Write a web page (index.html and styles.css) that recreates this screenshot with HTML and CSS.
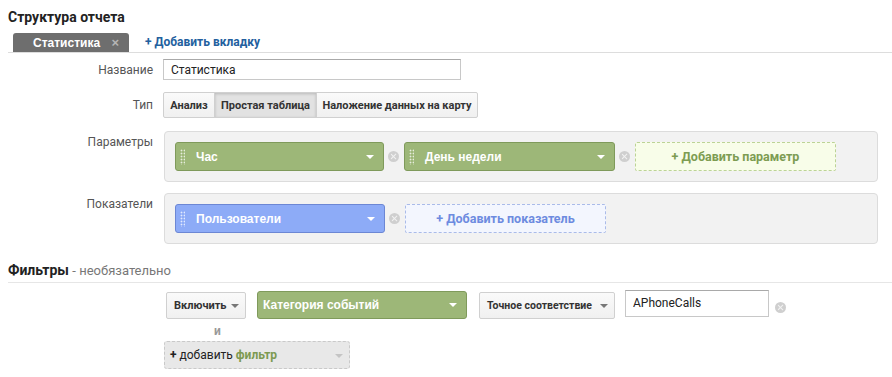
FILE: index.html
```html
<!DOCTYPE html>
<html lang="ru">
<head>
  <meta charset="UTF-8" />
  <title>Структура отчета</title>
  <link rel="stylesheet" href="styles.css">
</head>
<body>
  <div class="page">
    <h1 class="title">Структура отчета</h1>

    <div class="tabs">
      <div class="tab">Статистика <span class="tab-close">×</span></div>
      <a class="add-tab">+ Добавить вкладку</a>
    </div>

    <div class="row row-name">
      <label>Название</label>
      <input type="text" class="text-input name-input" value="Статистика">
    </div>

    <div class="row row-type">
      <label>Тип</label>
      <div class="btn-group">
        <button class="seg">Анализ</button>
        <button class="seg active">Простая таблица</button>
        <button class="seg">Наложение данных на карту</button>
      </div>
    </div>

    <div class="row row-box row-dims">
      <label>Параметры</label>
      <div class="box">
        <div class="chip green w209"><span class="grip"></span>Час<span class="caret"></span></div>
        <span class="remove"></span>
        <div class="chip green w211"><span class="grip"></span>День недели<span class="caret"></span></div>
        <span class="remove"></span>
        <div class="add-slot green-slot">+ Добавить параметр</div>
      </div>
    </div>

    <div class="row row-box row-metrics">
      <label>Показатели</label>
      <div class="box">
        <div class="chip blue w210"><span class="grip"></span>Пользователи<span class="caret"></span></div>
        <span class="remove"></span>
        <div class="add-slot blue-slot">+ Добавить показатель</div>
      </div>
    </div>

    <h2 class="filters-title">Фильтры <span class="optional">- необязательно</span></h2>

    <div class="filter-row">
      <button class="drop drop-include">Включить<span class="caret dark"></span></button>
      <div class="chip green filter-chip">Категория событий<span class="caret"></span></div>
      <button class="drop drop-match">Точное соответствие<span class="caret dark"></span></button>
      <input type="text" class="text-input filter-input" value="APhoneCalls">
      <span class="remove"></span>
    </div>

    <div class="and">и</div>

    <div class="add-filter"><b>+</b> добавить <span class="olive">фильтр</span><span class="caret light"></span></div>
  </div>
</body>
</html>
```

FILE: styles.css
```css
body {
  margin: 0;
  font-family: Roboto, 'Liberation Sans', sans-serif;
  font-size: 12px;
  color: #333;
  background: #fff;
}
.page {
  padding: 0 0 0 8px;
}
.title {
  margin: 9px 0 0;
  font-size: 14px;
  line-height: 16px;
  font-weight: bold;
  color: #222;
}
.tabs {
  display: flex;
  align-items: flex-end;
  margin-top: 8px;
  height: 19px;
  border-bottom: 1px solid #ddd;
}
.tab {
  margin-left: 5px;
  width: 116px;
  height: 19px;
  line-height: 19px;
  box-sizing: border-box;
  padding-left: 20px;
  background: #6e6e6e;
  color: #fff;
  font-family: 'Liberation Sans', Arial, sans-serif;
  font-weight: bold;
  font-size: 12px;
  border-radius: 3px 3px 0 0;
}
.tab-close {
  margin-left: 8px;
  color: #b5b5b5;
  font-size: 13px;
}
.add-tab {
  margin-left: 16px;
  line-height: 19px;
  color: #23609e;
  font-weight: bold;
  font-size: 12px;
}
.row {
  display: flex;
  align-items: center;
}
.row label {
  width: 145px;
  padding-right: 10px;
  text-align: right;
  color: #555;
  font-size: 12px;
  flex-shrink: 0;
}
.row-name {
  margin-top: 6px;
}
.text-input {
  box-sizing: border-box;
  border: 1px solid #c8c8c8;
  border-top-color: #a9a9a9;
  padding: 0 7px;
  font-family: Roboto, sans-serif;
  font-size: 12px;
  color: #222;
  outline: none;
}
.name-input {
  width: 298px;
  height: 21px;
}
.row-type {
  margin-top: 12px;
}
.btn-group {
  display: flex;
}
.seg {
  height: 26px;
  padding: 0;
  white-space: nowrap;
  text-align: center;
  border: 1px solid #d0d0d0;
  margin-left: -1px;
  background: linear-gradient(#fafafa, #f0f0f0);
  font-family: Roboto, sans-serif;
  font-weight: bold;
  font-size: 11px;
  color: #333;
}
.seg:first-child {
  margin-left: 0;
  border-radius: 2px 0 0 2px;
  width: 52px;
}
.seg:last-child {
  border-radius: 0 2px 2px 0;
  width: 162px;
}
.seg.active {
  width: 103px;
  background: #e2e2e2;
  box-shadow: inset 0 1px 3px rgba(0,0,0,0.18);
}
.row-box {
  align-items: flex-start;
}
.row-box label {
  padding-top: 4px;
}
.row-dims {
  margin-top: 13px;
}
.row-metrics {
  margin-top: 11px;
}
.box {
  display: flex;
  align-items: center;
  margin-left: 1px;
  width: 714px;
  height: 51px;
  box-sizing: border-box;
  padding: 0 10px;
  background: #f2f2f2;
  border: 1px solid #dcdcdc;
  border-radius: 4px;
}
.chip {
  position: relative;
  display: flex;
  align-items: center;
  box-sizing: border-box;
  height: 29px;
  padding-left: 20px;
  border-radius: 3px;
  color: #fff;
  font-family: 'Liberation Sans', Arial, sans-serif;
  font-weight: bold;
  font-size: 12px;
}
.chip.green {
  background: #9db778;
  border: 1px solid #7f9a5b;
}
.chip.blue {
  background: #8dabf7;
  border: 1px solid #6c87d4;
}
.w209 { width: 209px; }
.w210 { width: 210px; }
.w211 { width: 211px; }
.grip {
  position: absolute;
  left: 4px;
  top: 6px;
  width: 5px;
  height: 16px;
  background-image: radial-gradient(circle, rgba(255,255,255,0.75) 0.8px, transparent 1.1px);
  background-size: 3px 3px;
}
.caret {
  position: absolute;
  right: 9px;
  top: 12px;
  width: 0;
  height: 0;
  border-left: 4px solid transparent;
  border-right: 4px solid transparent;
  border-top: 4px solid #fff;
}
.caret.dark {
  border-top-color: #777;
  right: 6px;
  top: 11px;
}
.caret.light {
  border-top-color: #c4c4c4;
  right: 6px;
  top: 12px;
}
.remove {
  position: relative;
  flex-shrink: 0;
  width: 11px;
  height: 11px;
  margin: 0 5px 0 4px;
  border-radius: 50%;
  background: #cfcfcf;
}
.remove::before,
.remove::after {
  content: "";
  position: absolute;
  left: 5px;
  top: 2px;
  width: 1.4px;
  height: 7px;
  background: #f2f2f2;
  transform: rotate(45deg);
}
.remove::after {
  transform: rotate(-45deg);
}
.add-slot {
  width: 201px;
  height: 29px;
  box-sizing: border-box;
  display: flex;
  align-items: center;
  justify-content: center;
  font-weight: bold;
  font-size: 12.5px;
  border-radius: 2px;
}
.green-slot {
  background: #f8fde9;
  border: 1px dashed #bcd396;
  color: #7d9c52;
}
.blue-slot {
  background: #f3f6fe;
  border: 1px dashed #aabbe9;
  color: #6d8be0;
}
.filters-title {
  margin: 18px 0 0;
  padding-bottom: 3px;
  border-bottom: 1px solid #e6e6e6;
  font-size: 14px;
  line-height: 16px;
  font-weight: bold;
  color: #222;
}
.optional {
  font-weight: normal;
  font-size: 13px;
  color: #777;
}
.filter-row {
  display: flex;
  align-items: center;
  margin-top: 7px;
  padding-left: 158px;
  height: 30px;
}
.drop {
  position: relative;
  height: 27px;
  box-sizing: border-box;
  padding: 0 0 0 7px;
  white-space: nowrap;
  text-align: left;
  border: 1px solid #d0d0d0;
  border-radius: 2px;
  background: linear-gradient(#fafafa, #f0f0f0);
  font-family: Roboto, sans-serif;
  font-weight: bold;
  font-size: 11px;
  color: #333;
}
.drop-include {
  width: 80px;
}
.drop-match {
  width: 136px;
  margin-left: 12px;
  font-size: 10.5px;
}
.filter-chip {
  width: 210px;
  height: 28px;
  margin-left: 11px;
  padding-left: 5px;
  align-self: center;
}
.filter-chip .caret {
  top: 11px;
}
.filter-input {
  width: 144px;
  height: 27px;
  margin-left: 10px;
  margin-top: -4px;
}
.filter-input + .remove {
  margin: 4px 0 0 6px;
}
.and {
  margin: 4px 0 0 206px;
  line-height: 14px;
  font-weight: bold;
  font-size: 12px;
  color: #999;
}
.add-filter {
  position: relative;
  margin: 3px 0 0 156px;
  width: 186px;
  height: 28px;
  box-sizing: border-box;
  padding-left: 5px;
  line-height: 26px;
  background: #e8e8e8;
  border: 1px dashed #c9c9c9;
  border-radius: 3px;
  font-size: 12px;
  color: #222;
}
.olive {
  color: #7d9a52;
  font-weight: bold;
}
```
